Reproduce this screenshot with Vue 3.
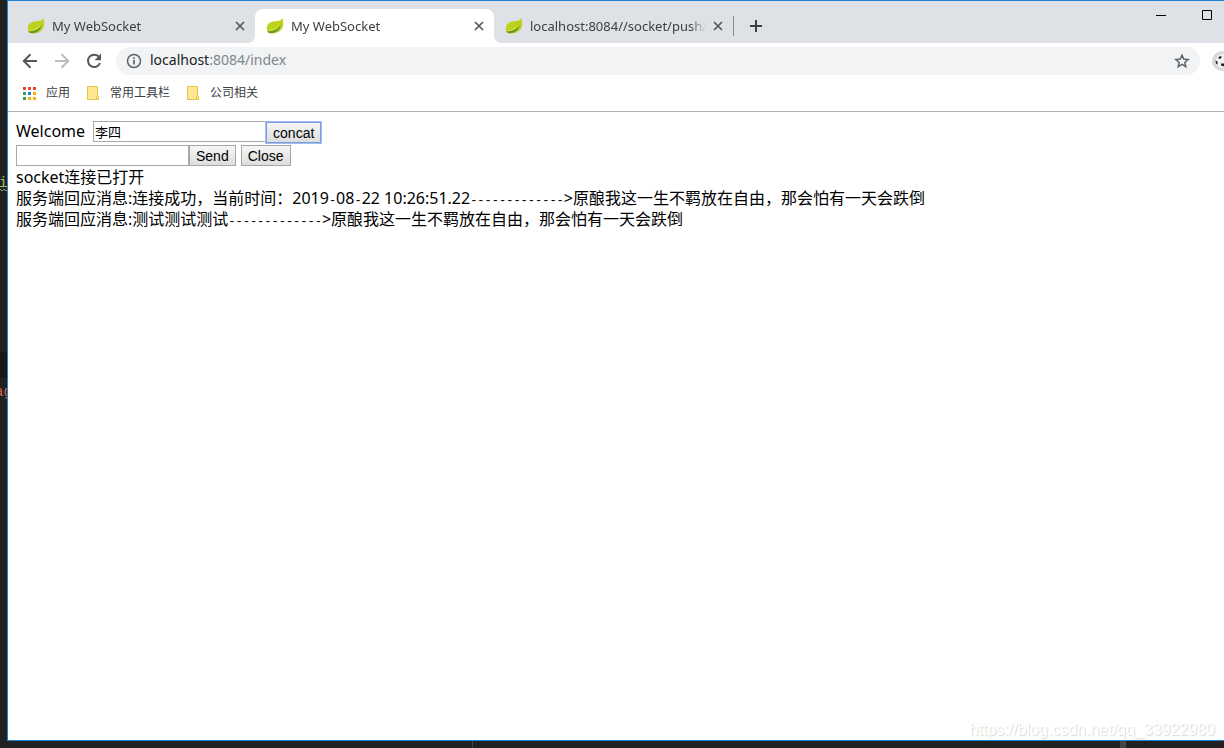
<script setup>
import { ref } from 'vue'

const tabs = [
  { id: 1, title: 'My WebSocket', active: false },
  { id: 2, title: 'My WebSocket', active: true },
  { id: 3, title: 'localhost:8084//socket/push/张三', active: false }
]
const folders = ['常用工具栏', '公司相关']
const dots = ['#ea4335', '#ea4335', '#ea4335', '#34a060', '#1a82e8', '#fbaf05', '#34a060', '#fbaf05', '#fbaf05']
const name = ref('李四')
const message = ref('')
const arrow = '-------------'
const lyric = '原酿我这一生不羁放在自由，那会怕有一天会跌倒'
</script>

<template>
  <div class="desktop">
    <div class="backdrop" aria-hidden="true">
      <span class="band"></span>
      <span class="code green">i</span>
      <svg class="wave" width="7" height="4" viewBox="0 0 7 4"><path d="M0 1l2 2 2-2 2 2 1-1" fill="none" stroke="#a39a6a" /></svg>
      <span class="code red">ag</span>
    </div>

    <div class="window">
      <header class="strip">
        <div v-for="tab in tabs" :key="tab.id" class="tab" :class="{ active: tab.active }">
          <svg class="leaf" width="18" height="16" viewBox="0 0 18 16">
            <path d="M16.4.3C15.5 2.4 12.600 3 9 3.300 3.800 3.700.7 6.300.8 10.500c0 2.900 1.500 4.700 4.100 4.900 6.800.5 12.300-3.200 12.400-9.400 0-2.100-.3-4.200-.9-5.700z" fill="#bfd11f" />
            <path d="M1.200 13.200c5.900.4 11-1.900 13.600-6.600-.6 5.500-5.100 8.900-10.800 8.500-1.300-.2-2.300-.7-2.800-1.900z" fill="#5f9a30" />
            <path d="M1.500 12.300c5.600-.3 10-2.300 13-6.200-1.600 4.400-6.100 7-11.800 7.200z" fill="#d3e02c" />
          </svg>
          <span class="title">{{ tab.title }}</span>
          <button class="plain close" :aria-label="'关闭 ' + tab.title">
            <svg width="10" height="10" viewBox="0 0 10 10"><path d="M1 1l8 8M9 1l-8 8" stroke="#54585c" stroke-width="1.7" /></svg>
          </button>
        </div>
        <span class="divider"></span>
        <button class="plain add" aria-label="新标签页">
          <svg width="12" height="12" viewBox="0 0 12 12"><path d="M6 0v12M0 6h12" stroke="#3c4043" stroke-width="2" /></svg>
        </button>
        <div class="controls">
          <button class="plain" aria-label="最小化">
            <svg width="10" height="10" viewBox="0 0 10 10"><path d="M0 5.5h10" stroke="#000" /></svg>
          </button>
          <button class="plain" aria-label="最大化">
            <svg width="10" height="10" viewBox="0 0 10 10"><path d="M.5.5h9v9h-9z" fill="none" stroke="#000" /></svg>
          </button>
        </div>
      </header>

      <nav class="toolbar">
        <button class="plain nav" aria-label="后退">
          <svg width="16" height="16" viewBox="0 0 16 16"><path d="M15 8H2M8.5 1.3L1.8 8l6.7 6.7" fill="none" stroke="#54585c" stroke-width="2" /></svg>
        </button>
        <button class="plain nav" aria-label="前进">
          <svg width="16" height="16" viewBox="0 0 16 16"><path d="M1 8h13M7.5 1.3L14.2 8l-6.7 6.7" fill="none" stroke="#babcbe" stroke-width="2" /></svg>
        </button>
        <button class="plain nav" aria-label="重新加载">
          <svg width="16" height="16" viewBox="0 0 16 16">
            <path d="M13.2 4.2A6.2 6.2 0 1 0 14 10" fill="none" stroke="#54585c" stroke-width="2" />
            <path d="M15 .6v6.6H8.6z" fill="#54585c" />
          </svg>
        </button>
        <div class="omnibox">
          <svg width="16" height="16" viewBox="0 0 16 16">
            <circle cx="8" cy="8" r="6.5" fill="none" stroke="#5f6368" stroke-width="1.5" />
            <path d="M8 7v4.6M8 4.2v1.7" stroke="#5f6368" stroke-width="1.7" />
          </svg>
          <span class="url">localhost<span class="path">:8084/index</span></span>
          <button class="plain star" aria-label="为此网页添加书签">
            <svg width="16" height="16" viewBox="0 0 16 16"><path d="M8 2.1l1.7 4 4.4.4-3.3 2.9 1 4.3L8 11.4l-3.8 2.3 1-4.3-3.3-2.9 4.4-.4z" fill="none" stroke="#5f6368" stroke-width="1.5" /></svg>
          </button>
        </div>
        <button class="plain avatar" aria-label="用户">
          <svg width="20" height="20" viewBox="0 0 20 20">
            <circle cx="10" cy="10" r="10" fill="#d9d9d9" />
            <circle cx="11" cy="10" r="7" fill="#f2f2f2" />
            <path d="M6 7l2-2 2 1-2 2zM3.500 9.500l2 1v3l-1.500-1zM9 12.500l3 0v3l-3-1z" fill="#222" />
          </svg>
        </button>
      </nav>

      <nav class="bookmarks">
        <a href="#" class="mark">
          <span class="apps"><i v-for="(c, i) in dots" :key="i" :style="{ background: c }"></i></span>应用
        </a>
        <a v-for="f in folders" :key="f" href="#" class="mark">
          <svg class="folder" width="14" height="16" viewBox="0 0 14 16">
            <path d="M.5 1.500h10v13h-10z" fill="#ffe694" stroke="#e8c34a" />
            <path d="M9.500 14.500v-3l1-1.500 1 1.500v3z" fill="#ffe694" stroke="#e8c34a" />
          </svg>{{ f }}
        </a>
      </nav>

      <main class="page">
        <form class="row" @submit.prevent>
          <label class="welcome" for="name">Welcome</label>
          <input id="name" v-model="name" type="text" />
          <button class="btn focused" type="button">concat</button>
        </form>
        <form class="row second" @submit.prevent>
          <input v-model="message" type="text" aria-label="消息" />
          <button class="btn" type="button">Send</button>
          <button class="btn apart" type="button">Close</button>
        </form>
        <div class="log">
          <div>socket连接已打开</div>
          <div>服务端回应消息:连接成功，当前时间：2019<span class="dashes">-</span>08<span class="dashes">-</span>22 10:26:51.22<span class="dashes">{{ arrow }}</span>&gt;{{ lyric }}</div>
          <div>服务端回应消息:测试测试测试<span class="dashes">{{ arrow }}</span>&gt;{{ lyric }}</div>
        </div>
      </main>
    </div>

    <footer class="under" aria-hidden="true"><span class="tick thin"></span><span class="tick"></span></footer>
    <span class="watermark">https://blog.csdn.net/qq_33922980</span>
  </div>
</template>

<style>
body {
  margin: 0;
}
</style>

<style scoped>
.desktop {
  position: relative;
  box-sizing: border-box;
  display: grid;
  grid-template-columns: 7px minmax(0, 1fr);
  grid-template-rows: 1fr 7px;
  min-height: 100vh;
  overflow: hidden;
  background: #212121;
  font-family: "Noto Sans", "Noto Sans CJK SC", sans-serif;
}
.backdrop {
  position: relative;
  overflow: hidden;
}
.band {
  position: absolute;
  top: 352px;
  width: 7px;
  height: 26px;
  background: #181818;
}
.code {
  position: absolute;
  left: -1px;
  font: 14px/16px "Liberation Mono", monospace;
}
.green {
  top: 175px;
  color: #a5c261;
}
.wave {
  position: absolute;
  top: 188px;
  left: 0;
}
.red {
  top: 384px;
  left: -5px;
  color: #cf6a4c;
}
.window {
  display: flex;
  flex-direction: column;
  min-width: 0;
  border: 1px solid #1883d7;
  border-right: 0;
  background: #fff;
}
.plain {
  display: flex;
  align-items: center;
  justify-content: center;
  padding: 0;
  border: 0;
  background: none;
}
.strip {
  display: flex;
  height: 42px;
  padding-left: 8px;
  background: #dee1e6;
}
.tab {
  position: relative;
  box-sizing: border-box;
  display: flex;
  align-items: center;
  width: 239px;
  margin-top: 8px;
  padding: 0 7px 0 11px;
  color: #3c4043;
  font-size: 13px;
}
.tab.active {
  border-radius: 8px 8px 0 0;
  background: #fff;
}
.tab.active::before,
.tab.active::after {
  content: "";
  position: absolute;
  bottom: 0;
  width: 8px;
  height: 8px;
}
.tab.active::before {
  right: 100%;
  background: radial-gradient(circle at 0 0, transparent 8px, #fff 8px);
}
.tab.active::after {
  left: 100%;
  background: radial-gradient(circle at 100% 0, transparent 8px, #fff 8px);
}
.leaf {
  flex: none;
}
.title {
  flex: 1;
  height: 18px;
  margin: 0 4px 0 7px;
  overflow: hidden;
  line-height: 18px;
  white-space: nowrap;
  mask-image: linear-gradient(to right, #000 calc(100% - 16px), transparent);
}
.close {
  width: 16px;
  height: 16px;
}
.divider {
  width: 1px;
  height: 20px;
  margin-top: 15px;
  background: #888b8f;
}
.add {
  width: 28px;
  height: 28px;
  margin: 11px 0 0 8px;
}
.controls {
  display: flex;
  margin: 0 -6px 0 auto;
}
.controls button {
  width: 46px;
  height: 28px;
}
.toolbar {
  display: flex;
  align-items: center;
  height: 36px;
  padding-left: 6px;
  overflow: hidden;
}
.nav {
  flex: none;
  width: 32px;
  height: 28px;
}
.omnibox {
  display: flex;
  flex: 1;
  align-items: center;
  gap: 8px;
  height: 28px;
  margin-left: 6px;
  padding: 0 10px;
  border-radius: 14px;
  background: #f1f3f4;
}
.url {
  flex: 1;
  padding-bottom: 2px;
  color: #202124;
  font-size: 14px;
  line-height: 20px;
}
.path {
  color: #80868b;
}
.avatar {
  flex: none;
  width: 20px;
  margin: 0 -8px 0 12px;
}
.bookmarks {
  display: flex;
  gap: 17px;
  height: 32px;
  padding-left: 14px;
  border-bottom: 1px solid #b0b1b2;
}
.mark {
  display: flex;
  align-items: center;
  height: 28px;
  color: #3c4043;
  font-size: 12px;
  line-height: 16px;
  text-decoration: none;
}
.apps {
  display: grid;
  grid-template-columns: repeat(3, 3px);
  grid-auto-rows: 3px;
  gap: 2px;
  margin: 0 10px 0 1px;
}
.folder {
  margin-right: 9px;
}
.page {
  flex: 1;
  padding: 9px 8px;
  color: #000;
  font-size: 16px;
}
.row {
  display: flex;
}
.second {
  margin-top: 2px;
}
.welcome {
  margin-right: 8px;
  line-height: 20px;
}
input {
  box-sizing: border-box;
  width: 173px;
  height: 21px;
  padding: 1px;
  border: 1px solid #a9a9a9;
  background: #fff;
  color: #000;
  font: 13px "Liberation Sans", "Noto Sans CJK SC", sans-serif;
}
.btn {
  box-sizing: border-box;
  height: 21px;
  padding: 0 6px;
  border: 1px solid #a6a6a6;
  background: linear-gradient(#f6f6f6, #dddddd);
  color: #000;
  font: 14px "Liberation Sans", sans-serif;
}
.focused {
  margin-top: 1px;
  border-color: #7a9de0;
  box-shadow: 0 0 0 1px #a3bdef;
}
.apart {
  margin-left: 5px;
}
.log {
  margin-top: 1px;
  line-height: 21px;
}
.dashes {
  font-family: "Liberation Mono", monospace;
  font-size: 12px;
  line-height: 12px;
}
.under {
  display: flex;
  grid-column: 1 / -1;
  justify-content: space-between;
  padding: 0 98px 0 472px;
}
.tick {
  width: 6px;
  background: #444;
}
.thin {
  width: 1px;
}
.watermark {
  position: absolute;
  right: 9px;
  bottom: 8px;
  color: #fff;
  font: 16px/20px "Liberation Sans", sans-serif;
  text-shadow: 1px 1px 1px #d8d8d8;
}
</style>
